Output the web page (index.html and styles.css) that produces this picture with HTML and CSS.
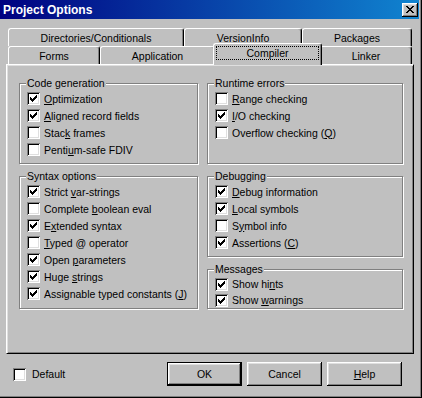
FILE: index.html
```html
<!DOCTYPE html>
<html lang="en">
<head>
  <meta charset="UTF-8" />
  <meta name="viewport" content="width=device-width, initial-scale=1.0"/>
  <title>Project Options</title>
  <link rel="stylesheet" href="styles.css">
</head>
<body>

  <!-- shared check mark glyph -->
  <svg class="defs" width="0" height="0">
    <symbol id="chk" viewBox="0 0 13 13">
      <path shape-rendering="crispEdges" fill="#000" d="M3 5h1v3h-1z M4 6h1v3h-1z M5 7h1v3h-1z M6 6h1v3h-1z M7 5h1v3h-1z M8 4h1v3h-1z M9 3h1v3h-1z"/>
    </symbol>
  </svg>

  <div class="window">
    <div class="titlebar">
      <span class="title">Project Options</span>
      <span class="close-btn">
        <svg width="16" height="14" viewBox="0 0 16 14">
          <path shape-rendering="crispEdges" fill="#000" d="M4 3h2v1h-2z M10 3h2v1h-2z M5 4h2v1h-2z M9 4h2v1h-2z M6 5h4v1h-4z M7 6h2v1h-2z M6 7h4v1h-4z M5 8h2v1h-2z M9 8h2v1h-2z M4 9h2v1h-2z M10 9h2v1h-2z"/>
        </svg>
      </span>
    </div>

    <!-- Tabs -->
    <div class="tabs">
      <div class="tab-row">
        <div class="tab tab-dirs">Directories/Conditionals</div>
        <div class="tab tab-version">VersionInfo</div>
        <div class="tab tab-packages">Packages</div>
      </div>
      <div class="tab-row">
        <div class="tab tab-forms">Forms</div>
        <div class="tab tab-app">Application</div>
        <div class="tab tab-compiler active"><span class="focus">Compiler</span></div>
        <div class="tab tab-linker">Linker</div>
      </div>
    </div>

    <!-- Compiler page -->
    <div class="page">
      <div class="grid">
        <fieldset class="group">
          <legend>Code generation</legend>
          <label class="check"><span class="box"><svg class="mark"><use href="#chk"/></svg></span><span><u>O</u>ptimization</span></label>
          <label class="check"><span class="box"><svg class="mark"><use href="#chk"/></svg></span><span><u>A</u>ligned record fields</span></label>
          <label class="check"><span class="box"></span><span>Stac<u>k</u> frames</span></label>
          <label class="check"><span class="box"></span><span>Penti<u>u</u>m-safe FDIV</span></label>
        </fieldset>

        <fieldset class="group">
          <legend>Runtime errors</legend>
          <label class="check"><span class="box"></span><span><u>R</u>ange checking</span></label>
          <label class="check"><span class="box"><svg class="mark"><use href="#chk"/></svg></span><span><u>I</u>/O checking</span></label>
          <label class="check"><span class="box"></span><span>Overflow checking (<u>Q</u>)</span></label>
        </fieldset>

        <fieldset class="group">
          <legend>Syntax options</legend>
          <label class="check"><span class="box"><svg class="mark"><use href="#chk"/></svg></span><span>Strict <u>v</u>ar-strings</span></label>
          <label class="check"><span class="box"></span><span>Complete <u>b</u>oolean eval</span></label>
          <label class="check"><span class="box"><svg class="mark"><use href="#chk"/></svg></span><span>E<u>x</u>tended syntax</span></label>
          <label class="check"><span class="box"></span><span><u>T</u>yped @ operator</span></label>
          <label class="check"><span class="box"><svg class="mark"><use href="#chk"/></svg></span><span>Open <u>p</u>arameters</span></label>
          <label class="check"><span class="box"><svg class="mark"><use href="#chk"/></svg></span><span>Huge <u>s</u>trings</span></label>
          <label class="check"><span class="box"><svg class="mark"><use href="#chk"/></svg></span><span>Assignable typed constants (<u>J</u>)</span></label>
        </fieldset>

        <div class="stack">
          <fieldset class="group">
            <legend>Debugging</legend>
            <label class="check"><span class="box"><svg class="mark"><use href="#chk"/></svg></span><span><u>D</u>ebug information</span></label>
            <label class="check"><span class="box"><svg class="mark"><use href="#chk"/></svg></span><span><u>L</u>ocal symbols</span></label>
            <label class="check"><span class="box"></span><span>S<u>y</u>mbol info</span></label>
            <label class="check"><span class="box"><svg class="mark"><use href="#chk"/></svg></span><span>Assertions (<u>C</u>)</span></label>
          </fieldset>

          <fieldset class="group tight">
            <legend>Messages</legend>
            <label class="check"><span class="box"><svg class="mark"><use href="#chk"/></svg></span><span>Show hi<u>n</u>ts</span></label>
            <label class="check"><span class="box"><svg class="mark"><use href="#chk"/></svg></span><span>Show <u>w</u>arnings</span></label>
          </fieldset>
        </div>
      </div>
    </div>

    <!-- Bottom bar -->
    <div class="bottom">
      <label class="check default-check"><span class="box"></span><span>Default</span></label>
      <div class="buttons">
        <button class="btn default">OK</button>
        <button class="btn">Cancel</button>
        <button class="btn"><u>H</u>elp</button>
      </div>
    </div>
  </div>

</body>
</html>
```

FILE: styles.css
```css
body {
  margin: 0;
  font-family: "Liberation Sans", Arial, sans-serif;
  font-size: 10.5px;
  color: #000;
  background: #c0c0c0;
}

.defs {
  position: absolute;
  width: 0;
  height: 0;
}

.window {
  width: 422px;
  height: 398px;
  box-sizing: border-box;
  padding-right: 3px;
  background: #c0c0c0;
  box-shadow: inset -1px -1px #000, inset -2px -2px #808080;
  display: flex;
  flex-direction: column;
}

/* Title bar */
.titlebar {
  height: 19px;
  display: flex;
  align-items: center;
  justify-content: space-between;
  padding: 0 1px 0 3px;
  background: linear-gradient(to right, #000080, #1084d0);
  color: #fff;
  font-weight: bold;
  font-size: 12px;
}

.close-btn {
  width: 16px;
  height: 14px;
  background: #c0c0c0;
  box-shadow: inset -1px -1px #000, inset 1px 1px #fff, inset -2px -2px #808080, inset 2px 2px #dfdfdf;
}

.close-btn svg {
  display: block;
}

/* Tabs */
.tabs {
  margin: 9px 0 0 8px;
  width: 404px;
}

.tab-row {
  display: flex;
  height: 18px;
}

.tab {
  box-sizing: border-box;
  border-top: 1px solid #fff;
  border-left: 1px solid #fff;
  border-right: 1px solid #000;
  border-radius: 3px 3px 0 0;
  box-shadow: inset -1px 0 #808080;
  background: #c0c0c0;
  display: flex;
  align-items: center;
  justify-content: center;
  padding-top: 1px;
}

.tab-dirs { width: 176px; }
.tab-version { width: 118px; }
.tab-packages { width: 110px; }
.tab-forms { width: 92px; }
.tab-app { width: 115px; }
.tab-compiler { width: 105px; }
.tab-linker { width: 92px; }

.tab.active {
  width: 109px;
  height: 22px;
  margin: -3px -2px -1px;
  padding-top: 0;
  align-items: flex-start;
  position: relative;
  z-index: 1;
}

.focus {
  flex: 1;
  margin: 2px 2px 0;
  height: 14px;
  box-sizing: border-box;
  border: 1px dotted #000;
  text-align: center;
  line-height: 12px;
}

/* Page */
.page {
  margin-left: 6px;
  width: 408px;
  height: 290px;
  box-sizing: border-box;
  border: 1px solid;
  border-color: #fff #000 #000 #fff;
  box-shadow: inset 1px 1px #dfdfdf, inset -1px -1px #808080;
  padding: 12px 10px 0 12px;
}

.grid {
  display: grid;
  grid-template-columns: 179px 196px;
  column-gap: 9px;
  row-gap: 6px;
}

.group {
  margin: 0;
  min-width: 0;
  padding: 1px 6px 5px 7px;
  border: 1px solid #808080;
  box-shadow: inset 1px 1px #fff, 1px 1px #fff;
}

.group legend {
  padding: 0 1px;
  margin-left: -1px;
  line-height: 12px;
  background: #c0c0c0;
}

.group.tight {
  padding-bottom: 0;
}

.group.tight .check {
  height: 16px;
}

.stack {
  display: flex;
  flex-direction: column;
  gap: 6px;
}

/* Check boxes */
.check {
  display: flex;
  align-items: center;
  gap: 4px;
  height: 17px;
  white-space: nowrap;
}

.box {
  width: 13px;
  height: 13px;
  flex: none;
  background: #fff;
  box-shadow: inset 1px 1px #808080, inset -1px -1px #fff, inset 2px 2px #000, inset -2px -2px #dfdfdf;
}

.mark {
  display: block;
  width: 13px;
  height: 13px;
}

u {
  text-underline-offset: 1px;
}

/* Bottom bar */
.bottom {
  display: flex;
  align-items: center;
  height: 24px;
  margin-top: 8px;
  padding-left: 13px;
}

.default-check {
  gap: 6px;
}

.buttons {
  margin-left: auto;
  margin-right: 17px;
  display: flex;
  gap: 5px;
}

.btn {
  width: 75px;
  height: 24px;
  box-sizing: border-box;
  padding: 0;
  border: none;
  background: #c0c0c0;
  font-family: inherit;
  font-size: 10.5px;
  color: #000;
  box-shadow: inset -1px -1px #000, inset 1px 1px #fff, inset -2px -2px #808080, inset 2px 2px #dfdfdf;
}

.btn.default {
  border: 1px solid #000;
}
```
